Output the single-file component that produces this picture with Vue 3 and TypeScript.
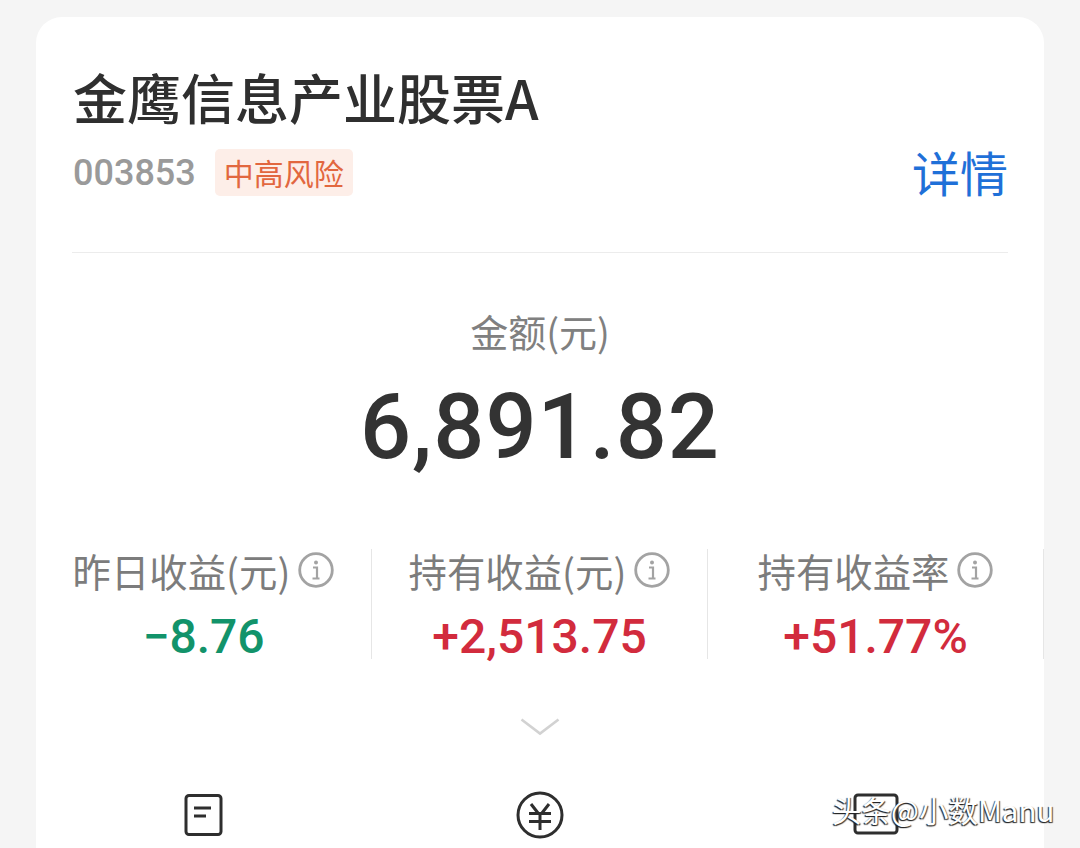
<script setup lang="ts">
interface Stat { label: string; unit: string; value: string; tone: string }
const stats: Stat[] = [
  { label: '昨日收益', unit: '(元)', value: '−8.76', tone: 'down' },
  { label: '持有收益', unit: '(元)', value: '+2,513.75', tone: 'up' },
  { label: '持有收益率', unit: '', value: '+51.77%', tone: 'up' },
]
</script>

<template>
  <div class="page">
    <section class="card">
      <header class="head">
        <h1 class="title">金鹰信息产业股票A</h1>
        <div class="meta">
          <span class="code">003853</span>
          <span class="tag">中高风险</span>
          <span class="detail">详情</span>
        </div>
      </header>

      <div class="amount">
        <div class="amount-label">金额(元)</div>
        <div class="amount-value">6,891.82</div>
      </div>

      <div class="stats">
        <div v-for="s in stats" :key="s.label" class="stat">
          <div class="stat-label">
            <span>{{ s.label }}{{ s.unit }}</span>
            <svg class="info" viewBox="0 0 36 36" fill="none">
              <circle cx="18" cy="18" r="16.3" stroke="#a3a3a3" stroke-width="2.8" />
              <circle cx="18" cy="10.5" r="2" fill="#a3a3a3" />
              <path d="M15 15.5h4v10.5M14.5 26.5h7" stroke="#a3a3a3" stroke-width="2.2" />
            </svg>
          </div>
          <div class="stat-value" :class="s.tone">{{ s.value }}</div>
        </div>
      </div>

      <div class="chevron">
        <svg width="40" height="18" viewBox="0 0 40 18" fill="none">
          <path d="M1.5 1.5 20 15.5 38.5 1.5" stroke="#d2d2d2" stroke-width="2.6" />
        </svg>
      </div>

      <div class="actions">
        <svg class="act" width="40" height="44" viewBox="0 0 40 44" fill="none">
          <rect x="2" y="2.5" width="35" height="39" rx="3" stroke="#2e2e2e" stroke-width="3" />
          <path d="M10 15h17M10 23h12" stroke="#2e2e2e" stroke-width="3" />
        </svg>
        <svg class="act" width="48" height="48" viewBox="0 0 48 48" fill="none">
          <circle cx="24" cy="24" r="22" stroke="#2e2e2e" stroke-width="3" />
          <path d="M15 13l7 9M33 13l-7 9M13 22.5h22M13 30.5h22M24 22v17" stroke="#2e2e2e" stroke-width="3" />
        </svg>
        <svg class="act" width="46" height="44" viewBox="0 0 46 44" fill="none">
          <rect x="2" y="2" width="42" height="38" rx="3" stroke="#2e2e2e" stroke-width="3" />
        </svg>
      </div>
    </section>
    <div class="watermark">头条@小数Manu</div>
  </div>
</template>

<style>
html, body { margin: 0; background: #f5f5f5; }
</style>

<style scoped>
.page {
  position: relative;
  width: 1080px;
  height: 848px;
  overflow: hidden;
  box-sizing: border-box;
  padding: 17px 36px 0;
  background: #f5f5f5;
  font-family: "Noto Sans CJK SC", Roboto, sans-serif;
}
.card {
  height: 900px;
  box-sizing: border-box;
  padding: 0 36px;
  background: #fff;
  border-radius: 26px;
}
.head {
  height: 236px;
  box-sizing: border-box;
  border-bottom: 1px solid #ececec;
  padding-top: 45px;
}
.title {
  margin: 0 0 0 1px;
  font-size: 54px;
  line-height: 70px;
  font-weight: 500;
  color: #2f2f2f;
  white-space: nowrap;
}
.meta {
  display: flex;
  align-items: center;
  margin-top: 17px;
  height: 47px;
}
.code {
  font-family: Roboto, sans-serif;
  font-size: 36px;
  font-weight: 500;
  color: #9a9a9a;
  margin-left: 1px;
}
.tag {
  margin-left: 19px;
  width: 138px;
  height: 47px;
  line-height: 47px;
  text-align: center;
  font-size: 30px;
  color: #e2673f;
  background: #fdeee8;
  border-radius: 5px;
}
.detail {
  margin-left: auto;
  font-size: 48px;
  color: #1f70d8;
  line-height: 45px;
  padding-bottom: 2px;
}
.amount {
  text-align: center;
  padding-top: 49px;
}
.amount-label {
  font-size: 38px;
  line-height: 58px;
  color: #808080;
}
.amount-value {
  font-family: Roboto, sans-serif;
  font-size: 90px;
  font-weight: 500;
  letter-spacing: 1px;
  line-height: 104px;
  margin-top: 16px;
  color: #333;
}
.stats {
  display: grid;
  grid-template-columns: repeat(3, 336px);
  margin: 69px 0 0 -36px;
  height: 110px;
}
.stat {
  border-right: 1px solid #e6e6e6;
  box-sizing: border-box;
  text-align: center;
}
.stat-label {
  display: flex;
  align-items: center;
  justify-content: center;
  gap: 8px;
  font-size: 38.4px;
  line-height: 42px;
  color: #7c7c7c;
}
.info {
  width: 36px;
  height: 36px;
  flex: none;
}
.stat-value {
  font-family: Roboto, sans-serif;
  font-size: 48px;
  font-weight: 500;
  line-height: 44px;
  margin-top: 24px;
}
.down { color: #12936a; }
.up { color: #d22b3d; }
.chevron {
  display: flex;
  justify-content: center;
  margin-top: 59px;
  height: 18px;
}
.actions {
  display: grid;
  grid-template-columns: repeat(3, 336px);
  margin: 55px 0 0 -36px;
  justify-items: center;
  align-items: center;
}
.act { display: block; }
.watermark {
  position: absolute;
  left: 832px;
  top: 790px;
  font-size: 29.5px;
  line-height: 38px;
  color: #fff;
  white-space: nowrap;
  text-shadow: -1px 1px 1px #222, 1px 1px 1px #444;
}
</style>
